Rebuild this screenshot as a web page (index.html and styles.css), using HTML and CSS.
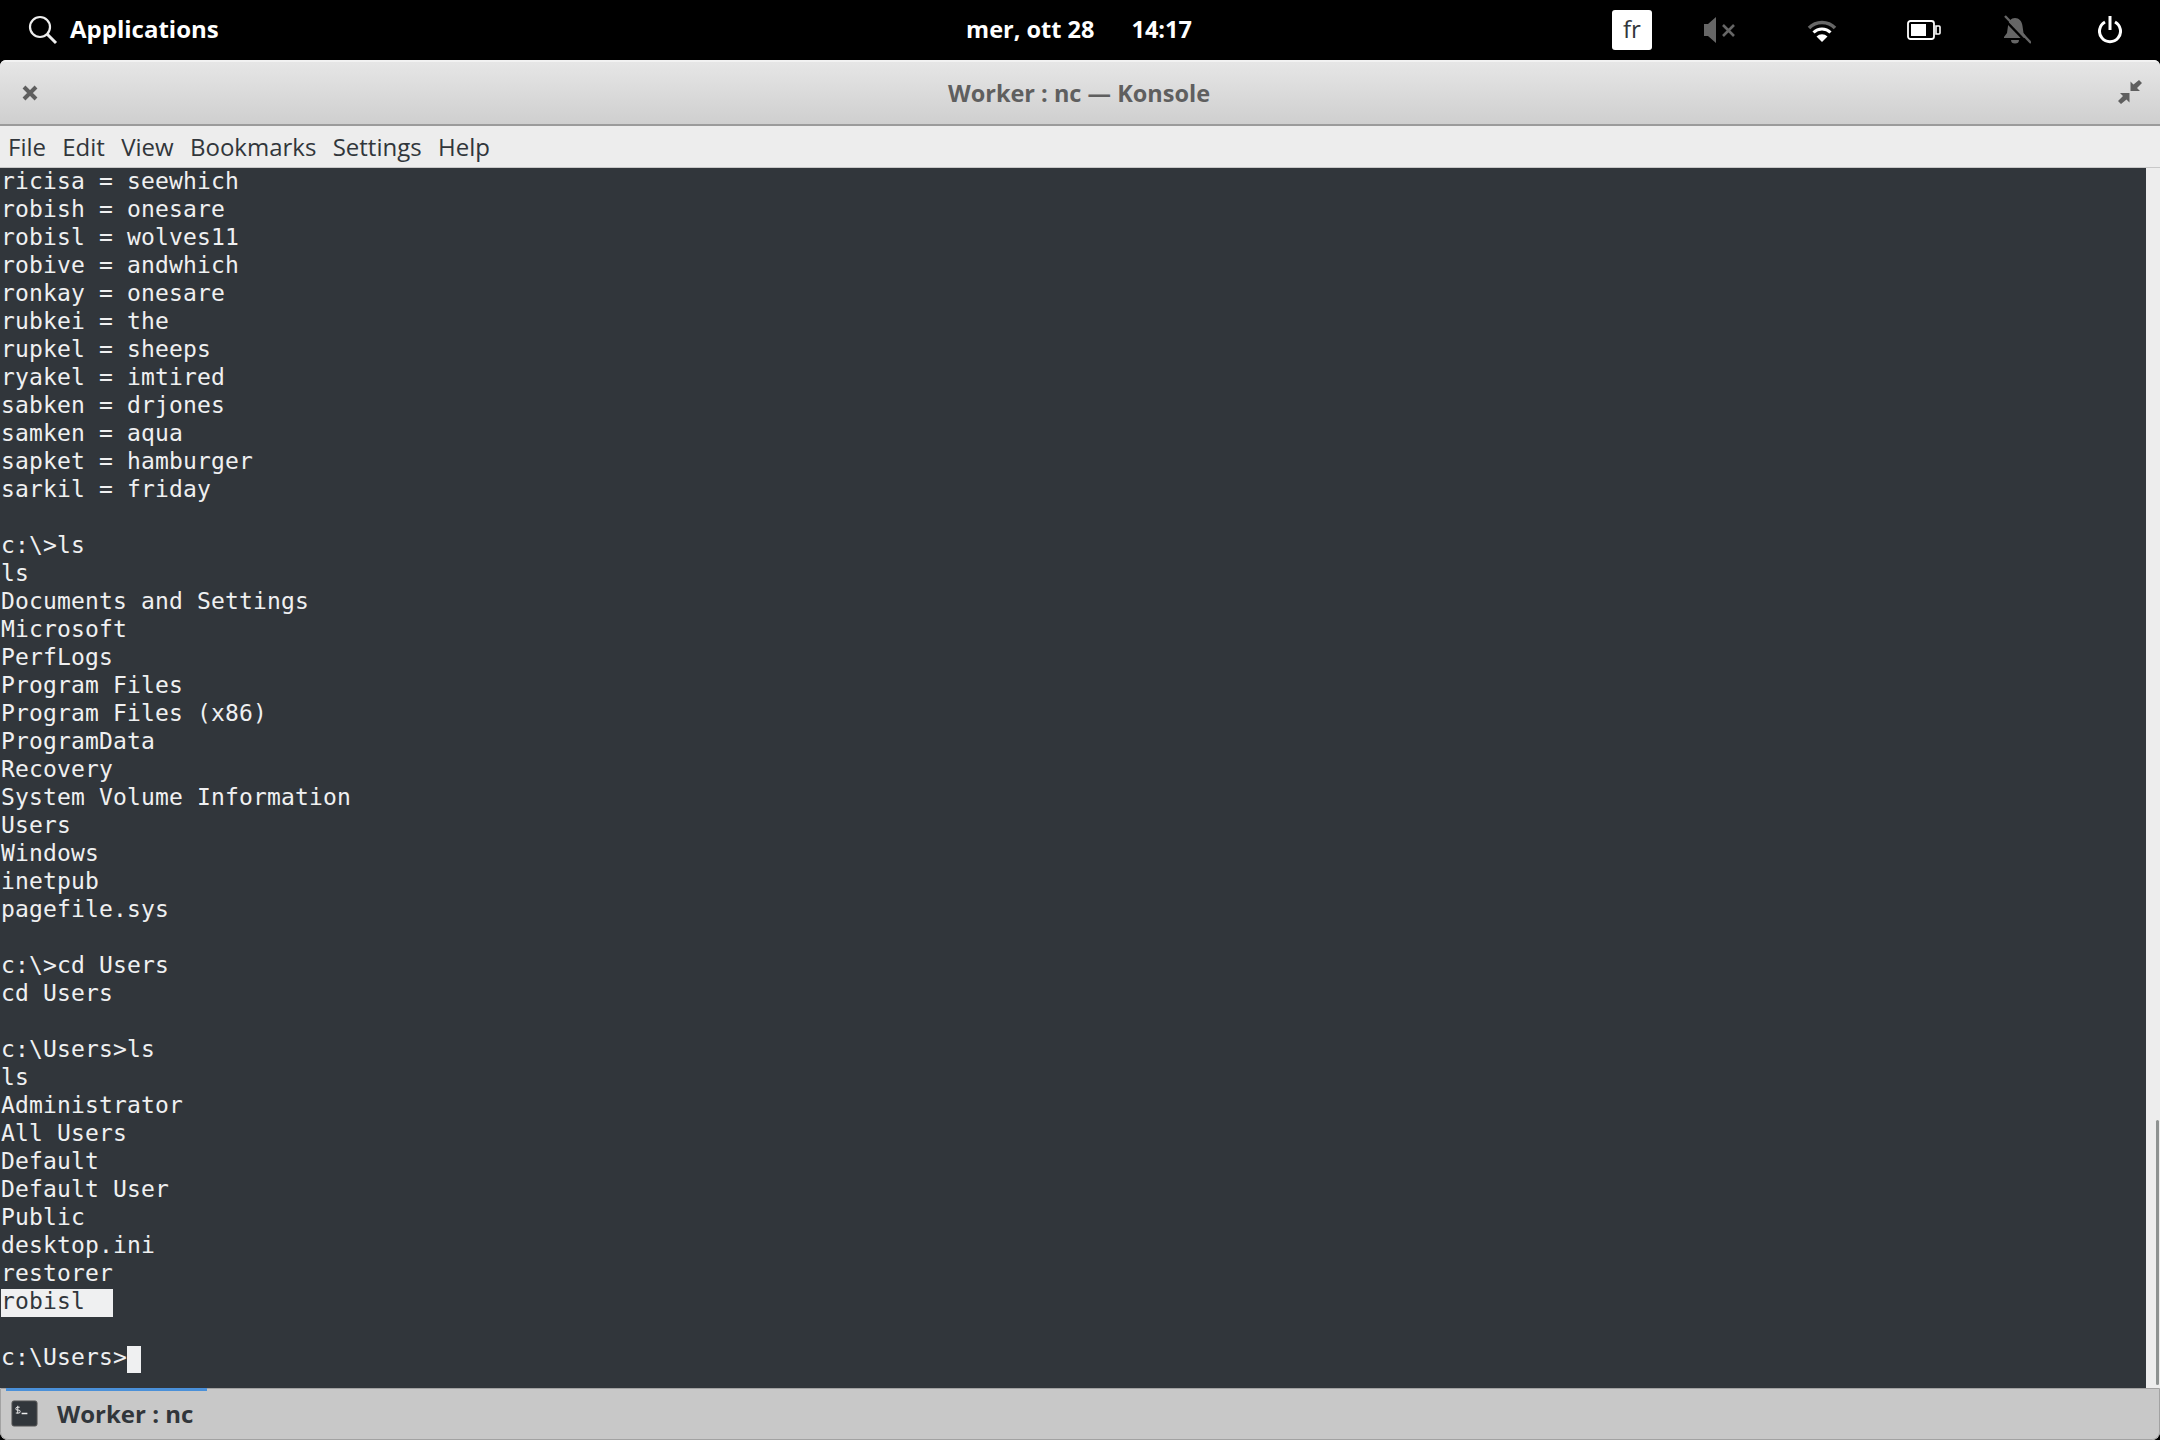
FILE: index.html
```
<!DOCTYPE html>
<html lang="it">
<head>
<meta charset="utf-8">
<title>Worker : nc — Konsole</title>
<link rel="stylesheet" href="styles.css">
</head>
<body>
<header class="panel">
  <div class="panel-left">
    <svg class="ico-search" width="30" height="30" viewBox="0 0 30 30"><circle cx="12" cy="12" r="10" fill="none" stroke="#eee" stroke-width="2.2"/><path d="M19 19l9 9" stroke="#eee" stroke-width="3" fill="none"/></svg>
    <span class="apps">Applications</span>
  </div>
  <div class="panel-clock"><span>mer, ott 28</span><span>14:17</span></div>
  <div class="panel-right">
    <span class="lang">fr</span>
    <svg class="tray-a" width="31" height="28" viewBox="0 0 31 28"><path d="M0 8h4l8-7v26l-8-7H0z" fill="#666"/><path d="M19 9l11 11M30 9L19 20" stroke="#666" stroke-width="2.600" fill="none"/></svg>
    <svg class="tray-b" width="30" height="24" viewBox="0 0 30 24"><path d="M2 10a18 18 0 0 1 26 0" stroke="#666" stroke-width="3.500" fill="none"/><path d="M6.500 14.500a12 12 0 0 1 17 0" stroke="#fff" stroke-width="3" fill="none"/><path d="M9.500 18.500a8 8 0 0 1 11 0L15 24z" fill="#fff"/></svg>
    <svg class="tray-c" width="36" height="20" viewBox="0 0 34 20"><rect x="1" y="1" width="26" height="18" rx="2.5" fill="none" stroke="#fff" stroke-width="1.8"/><rect x="4" y="4" width="15" height="12" fill="#fff"/><path d="M29 6h3a1 1 0 0 1 1 1v6a1 1 0 0 1-1 1h-3z" fill="none" stroke="#fff" stroke-width="1.6"/></svg>
    <svg class="tray-d" width="28" height="30" viewBox="0 0 28 30"><path d="M12 3c4 0 7 3 7.500 8l1 7 3 4v1H1v-1l3-4 1-7C5.500 6 8 3 12 3z" fill="#666"/><path d="M8 25h8a4 3.500 0 0 1-8 0z" fill="#666"/><path d="M0 3l25 26" stroke="#000" stroke-width="2.500" fill="none"/><path d="M2 1l26 27" stroke="#666" stroke-width="2.400" fill="none"/></svg>
    <svg class="tray-e" width="24" height="28" viewBox="0 0 24 28"><path d="M7 6a10.500 10.500 0 1 0 10 0" fill="none" stroke="#fff" stroke-width="3"/><path d="M12 0v14" stroke="#fff" stroke-width="3" fill="none"/></svg>
  </div>
</header>
<main class="window">
  <div class="titlebar">
    <svg class="close" width="16" height="16" viewBox="0 0 16 16"><path d="M2 2l12 12M14 2L2 14" stroke="#5f5f5f" stroke-width="4" fill="none"/></svg>
    <span class="title">Worker : nc — Konsole</span>
    <svg class="unmax" width="24" height="24" viewBox="0 0 24 24"><path d="M21 0l3 3-5 5 3 3H12.500V1.500l3 3z M3 24l-3-3 5-5-3-3h9.500v9.500l-3-3z" fill="#5f5f5f"/></svg>
  </div>
  <nav class="menubar"><span>File</span><span>Edit</span><span>View</span><span>Bookmarks</span><span>Settings</span><span>Help</span></nav>
  <div class="content">
<pre class="terminal">ricisa = seewhich
robish = onesare
robisl = wolves11
robive = andwhich
ronkay = onesare
rubkei = the
rupkel = sheeps
ryakel = imtired
sabken = drjones
samken = aqua
sapket = hamburger
sarkil = friday

c:\&gt;ls
ls
Documents and Settings
Microsoft
PerfLogs
Program Files
Program Files (x86)
ProgramData
Recovery
System Volume Information
Users
Windows
inetpub
pagefile.sys

c:\&gt;cd Users
cd Users

c:\Users&gt;ls
ls
Administrator
All Users
Default
Default User
Public
desktop.ini
restorer
<span class="sel">robisl  </span>

c:\Users&gt;<span class="cursor"> </span></pre>
    <div class="scrollbar"><div class="thumb"></div></div>
  </div>
  <footer class="tabbar">
    <div class="tab">
      <svg class="term-ico" width="27" height="27" viewBox="0 0 28 28"><rect x="1" y="1" width="26" height="26" rx="2" fill="#31363b" stroke="#555" stroke-width="1"/><path d="M7 6v8M9 7.500H6.500a1.200 1.200 0 0 0 0 3h1.500a1.200 1.200 0 0 1 0 3H5" stroke="#eee" stroke-width="1" fill="none"/><path d="M11 14h6" stroke="#eee" stroke-width="1.600" fill="none"/></svg>
      <span class="tab-label">Worker : nc</span>
    </div>
  </footer>
</main>
</body>
</html>
```
FILE: styles.css
```
html, body { margin: 0; padding: 0; background: #000; }
body { width: 2160px; height: 1440px; overflow: hidden; display: flex; flex-direction: column; font-family: "Open Sans", sans-serif; }

.panel { height: 60px; flex: none; background: #000; color: #fff; font-weight: 700; font-size: 24px; display: grid; grid-template-columns: 1fr auto 1fr; align-items: center; }
.panel-left { display: flex; align-items: center; padding-left: 28px; gap: 12px; }
.apps { padding-bottom: 4px; }
.panel-clock { display: flex; gap: 37px; padding: 0 2px 3px 0; font-size: 23.5px; }
.panel-right { display: flex; align-items: center; justify-content: flex-end; padding-right: 38px; }
.lang { width: 40px; height: 40px; margin-right: 52px; background: #fff; color: #31363b; border-radius: 3px; font-weight: 400; font-size: 24px; line-height: 38px; text-align: center; }
.tray-a { margin-right: 72px; }
.tray-b { margin-right: 69px; }
.tray-c { margin-right: 61px; }
.tray-d { margin-right: 67px; }

.window { flex: 1; display: flex; flex-direction: column; min-height: 0; border-radius: 6px 6px 8px 8px; overflow: hidden; background: #ededed; }
.titlebar { flex: none; height: 62px; background: linear-gradient(#e6e6e6, #cfcfcf); border-top: 2px solid #f2f2f2; border-bottom: 2px solid #9b9b9b; display: flex; align-items: center; justify-content: center; position: relative; }
.title { color: #5f5f5f; font-weight: 700; font-size: 23.5px; padding: 0 2px 1px 0; }
.close { position: absolute; left: 22px; top: 23px; }
.unmax { position: absolute; right: 18px; top: 18px; }

.menubar { height: 41px; flex: none; background: #ededed; border-bottom: 1px solid #c8c8c8; display: flex; gap: 16.3px; padding-left: 8px; align-items: center; color: #31363b; font-size: 24px; }

.content { flex: 1; min-height: 0; display: flex; overflow: hidden; background: #ededed; }
.terminal { flex: 1; margin: -1px 0 0; padding: 0 0 0 1px; background: #31363b; color: #eff0f1; font-family: "DejaVu Sans Mono", monospace; font-size: 23px; letter-spacing: 0.15px; line-height: 28px; overflow: hidden; isolation: isolate; }
.sel, .cursor { position: relative; color: #31363b; }
.sel::before, .cursor::before { content: ""; position: absolute; z-index: -1; left: 0; right: 0; top: 1px; height: 28px; background: #eff0f1; }
.cursor::before { top: 2px; height: 27px; }
.scrollbar { width: 14px; flex: none; position: relative; background: #ededed; }
.thumb { position: absolute; right: 1px; top: 952px; bottom: 3px; width: 3px; background: #8e9291; border-radius: 2px; }

.tabbar { height: 50px; flex: none; background: #c8c8c8; border: 1px solid #a2a2a2; display: flex; border-radius: 0 0 8px 8px; }
.tab { width: 201px; margin-left: 5px; border-top: 3px solid #4a90d9; margin-top: -1px; display: flex; align-items: center; gap: 19px; padding: 0 0 3px 5px; box-sizing: border-box; }
.tab-label { color: #31363b; font-weight: 700; font-size: 24px; }
```
